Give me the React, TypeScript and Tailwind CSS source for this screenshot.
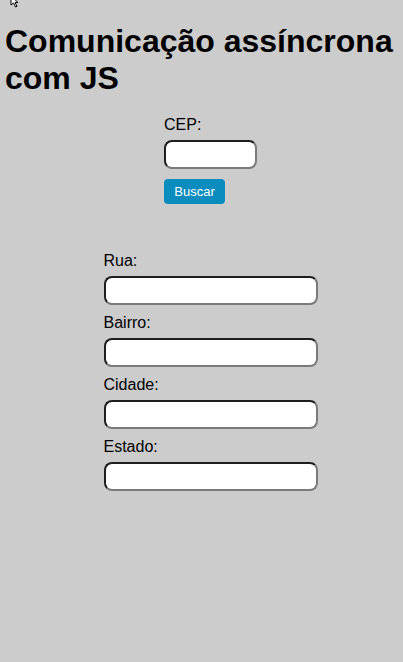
export default function App() {
  const fields = ["Rua", "Bairro", "Cidade", "Estado"];

  return (
    <div className="relative min-h-[662px] bg-[#cccccc] px-[5px] font-['Liberation_Sans',Arial,sans-serif] text-black">
      {/* mouse pointer left in the screenshot */}
      <svg className="absolute left-[10px] top-[-4px]" width="12" height="12" viewBox="0 0 12 12">
        <path d="M1 0 L1 9 L3.5 7 L5.5 11 L7 10.3 L5 6.5 L8 6.5 Z" fill="white" stroke="black" strokeWidth="1" />
      </svg>

      <h1 className="pt-[23px] text-[32px] font-bold leading-[37px]">
        Comunicação assíncrona com JS
      </h1>

      <div className="mt-[19px] flex flex-col items-center pl-[18px]">
        {/* CEP */}
        <div className="flex flex-col items-start">
          <label className="text-base leading-[18px]">CEP:</label>
          <input
            type="text"
            className="mt-[6px] h-[29px] w-[93px] rounded-[8px] border-2 border-[#1e1e1e] border-r-[#7a7a7a] border-b-[#7a7a7a] bg-white px-1 outline-none"
          />
          <button className="mt-[10px] h-[25px] w-[61px] rounded-[4px] bg-[#0a8dbe] text-[13px] text-white">
            Buscar
          </button>
        </div>

        {/* endereço */}
        <div className="mt-[48px] flex flex-col items-start">
          {fields.map((f) => (
            <div key={f} className="mb-[9px] flex flex-col items-start">
              <label className="text-base leading-[18px]">{f}:</label>
              <input
                type="text"
                className="mt-[6px] h-[29px] w-[214px] rounded-[8px] border-2 border-[#1e1e1e] border-r-[#7a7a7a] border-b-[#7a7a7a] bg-white px-1 outline-none"
              />
            </div>
          ))}
        </div>
      </div>
    </div>
  );
}
